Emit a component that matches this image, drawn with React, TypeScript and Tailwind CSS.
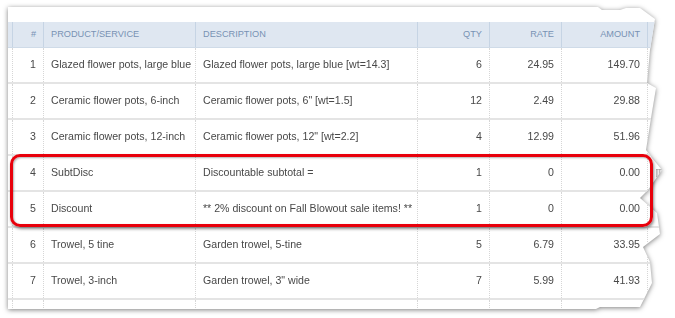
const rows = [
  ["1", "Glazed flower pots, large blue", "Glazed flower pots, large blue [wt=14.3]", "6", "24.95", "149.70"],
  ["2", "Ceramic flower pots, 6-inch", "Ceramic flower pots, 6\" [wt=1.5]", "12", "2.49", "29.88"],
  ["3", "Ceramic flower pots, 12-inch", "Ceramic flower pots, 12\" [wt=2.2]", "4", "12.99", "51.96"],
  ["4", "SubtDisc", "Discountable subtotal =", "1", "0", "0.00"],
  ["5", "Discount", "** 2% discount on Fall Blowout sale items! **", "1", "0", "0.00"],
  ["6", "Trowel, 5 tine", "Garden trowel, 5-tine", "5", "6.79", "33.95"],
  ["7", "Trowel, 3-inch", "Garden trowel, 3\" wide", "7", "5.99", "41.93"],
];

const cols = "grid grid-cols-[4px_31px_152px_222px_72px_72px_86px_1fr]";
const bodyCell = "border-l border-dotted border-[#d6d6d6] px-[7px] flex items-center whitespace-nowrap overflow-hidden";
const headCell = "border-l border-[#c6d4e4] px-[7px] flex items-center whitespace-nowrap";

export default function App() {
  return (
    <div className="relative w-[675px] h-[318px] bg-white overflow-hidden font-['Liberation_Sans',Arial,sans-serif]">
      <div className="ml-[8px] mt-[7px] w-[660px] [filter:drop-shadow(0_1px_2.5px_rgba(0,0,0,0.5))]">
        <div className="h-[302px] bg-white pt-[15px] [clip-path:polygon(0px_0px,590px_0px,594px_3px,612px_3px,618px_1px,632px_1px,647px_12px,642px_43px,639px_76px,648px_81px,644px_105px,638px_143px,644px_151px,654px_163px,640px_183px,632px_191px,649px_206px,652px_227px,635px_240px,642px_255px,644px_276px,637px_290px,632px_300px,592px_300px,588px_302px,0px_302px)]">
          <div className={`${cols} h-[26px] bg-[#dfe7f1] text-[9.2px] text-[#7892b4] border-b border-[#cfdbe8]`}>
            <div />
            <div className={`${headCell} justify-end`}>#</div>
            <div className={headCell}>PRODUCT/SERVICE</div>
            <div className={headCell}>DESCRIPTION</div>
            <div className={`${headCell} justify-end`}>QTY</div>
            <div className={`${headCell} justify-end`}>RATE</div>
            <div className={`${headCell} justify-end`}>AMOUNT</div>
            <div className={headCell} />
          </div>
          {rows.map((r) => (
            <div key={r[0]} className={`${cols} h-[36px] text-[10.6px] text-[#484848] border-b-2 border-[#e4e4e4]`}>
              <div />
              <div className={`${bodyCell} justify-end`}>{r[0]}</div>
              <div className={bodyCell}>{r[1]}</div>
              <div className={bodyCell}>{r[2]}</div>
              <div className={`${bodyCell} justify-end`}>{r[3]}</div>
              <div className={`${bodyCell} justify-end`}>{r[4]}</div>
              <div className={`${bodyCell} justify-end`}>{r[5]}</div>
              <div className={`${bodyCell} text-[#9a9a9a]`}>{r[0] === "4" ? "▥" : ""}</div>
            </div>
          ))}
          <div className={`${cols} h-[10px]`}>
            <div />
            <div className={bodyCell} />
            <div className={bodyCell} />
            <div className={bodyCell} />
            <div className={bodyCell} />
            <div className={bodyCell} />
            <div className={bodyCell} />
            <div className={bodyCell} />
          </div>
        </div>
      </div>
      <div className="absolute left-[10px] top-[154px] w-[643px] h-[73px] rounded-[10px] border-[3px] border-[#e8000b] shadow-[1px_2px_3px_rgba(0,0,0,0.45),inset_1px_1px_2px_rgba(0,0,0,0.3)]" />
    </div>
  );
}
